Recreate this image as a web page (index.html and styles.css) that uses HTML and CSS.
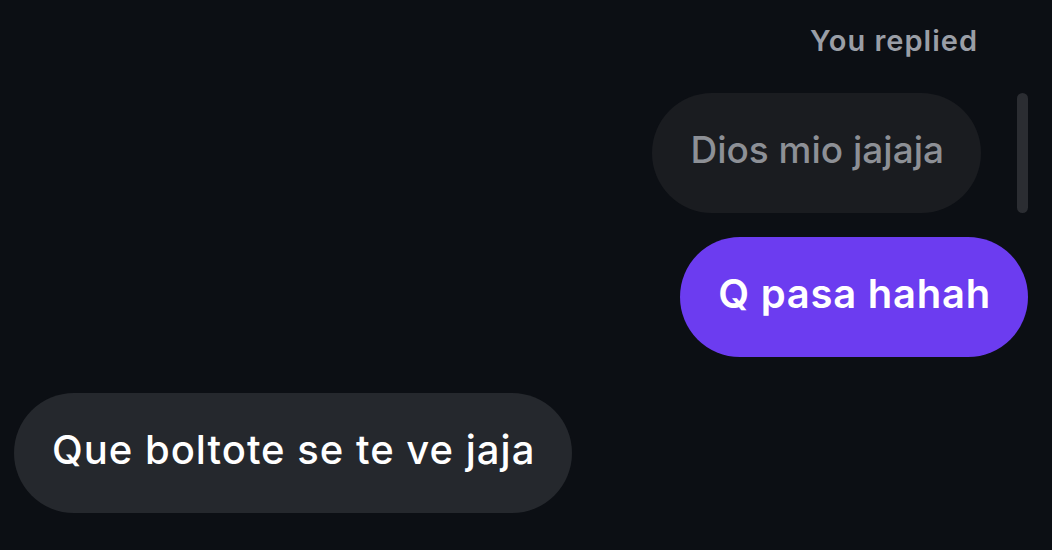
FILE: index.html
```html
<!DOCTYPE html>
<html lang="en">
  <head>
    <title>Chat</title>
    <meta charset="utf-8" />
    <link rel="stylesheet" href="styles.css">
  </head>
  <body>
    <div id="thread">
      <div class="reply-label">You replied</div>
      <div class="reply-row">
        <div class="bubble quoted">Dios mio jajaja</div>
        <div class="scroll-thumb"></div>
      </div>
      <div class="row mine">
        <div class="bubble sent">Q pasa hahah</div>
      </div>
      <div class="row theirs">
        <div class="bubble received">Que boltote se te ve jaja</div>
      </div>
    </div>
  </body>
</html>
```

FILE: styles.css
```css
html {
  height: 100%;
}
body {
  margin: 0;
  padding: 0;
  background: #0c0f14;
  color: #ffffff;
  font-family: Inter, "Noto Sans", sans-serif;
  height: 100%;
  overflow: hidden;
}

#thread {
  display: flex;
  flex-direction: column;
  padding: 22px 24px 0 14px;
}

.reply-label {
  align-self: flex-end;
  margin-right: 50px;
  font-size: 29px;
  font-weight: 600;
  letter-spacing: 1px;
  line-height: 38px;
  color: #9a9ea6;
}

.reply-row {
  display: flex;
  justify-content: flex-end;
  align-items: stretch;
  gap: 36px;
  margin-top: 33px;
}

.scroll-thumb {
  width: 11px;
  border-radius: 6px;
  background: #2b2d32;
}

.row {
  display: flex;
}
.row.mine {
  justify-content: flex-end;
  margin-top: 24px;
}
.row.theirs {
  justify-content: flex-start;
  margin-top: 36px;
}

.bubble {
  height: 120px;
  box-sizing: border-box;
  padding: 0 37px 8px 38px;
  display: flex;
  align-items: center;
  border-radius: 60px;
  font-size: 40px;
  font-weight: 600;
}

.bubble.quoted {
  background: #1a1c20;
  color: #8d9096;
  font-size: 37px;
  font-weight: 500;
}
.bubble.sent {
  background: #6c3cf0;
  letter-spacing: 0.75px;
}
.bubble.received {
  background: #25282d;
  font-weight: 500;
  letter-spacing: 1px;
}
```
